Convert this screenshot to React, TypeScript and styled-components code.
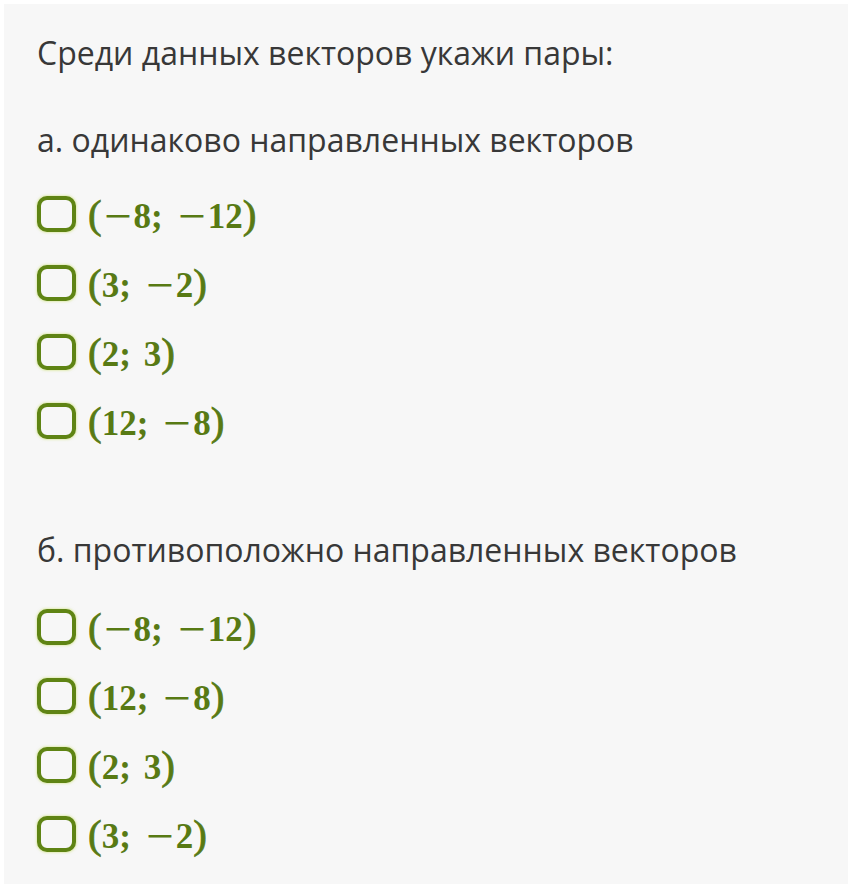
import React from "react";
import styled, { createGlobalStyle } from "styled-components";

const Global = createGlobalStyle`
  html, body { margin: 0; padding: 0; background: #ffffff; }
  body { font-family: "Open Sans", "Noto Sans", sans-serif; }
`;

const Panel = styled.div`
  margin: 4px 6px 0 4px;
  height: 880px;
  box-sizing: border-box;
  background: #f7f7f7;
  padding: 28px 0 0 33px;
  display: flex;
  flex-direction: column;
`;

const Heading = styled.div<{ $gap: number }>`
  font-family: "Open Sans", "Noto Sans", sans-serif;
  font-size: 32px;
  line-height: 42px;
  color: #383838;
  margin-top: ${(p) => p.$gap}px;
`;

const Options = styled.div<{ $gap: number }>`
  display: flex;
  flex-direction: column;
  margin-top: ${(p) => p.$gap}px;
`;

const Option = styled.label`
  height: 69px;
  display: flex;
  align-items: center;
  gap: 12px;
  cursor: pointer;
`;

const Box = styled.span`
  width: 39px;
  height: 36px;
  box-sizing: border-box;
  border: 4px solid #5f8414;
  border-radius: 10px;
  box-shadow: 0 0 2px 1px rgba(205, 225, 120, 0.5);
  background: #f7f7f7;
  flex: none;
  margin-top: -4px;
`;

const Math = styled.span`
  font-family: "Liberation Serif", "Times New Roman", serif;
  font-weight: 700;
  font-size: 35px;
  line-height: 40px;
  color: #587a14;
  white-space: pre;
  display: inline-flex;
  align-items: baseline;
`;

const Paren = styled.span`
  font-size: 41px;
  font-weight: 400;
  -webkit-text-stroke: 0.8px #587a14;
`;

const Minus = styled.span`
  display: inline-block;
  transform: scaleX(1.4);
  margin: 0 6px 0 6px;
`;

const Semi = styled.span`
  margin-right: 13px;
`;

function Expr({ text }: { text: string }) {
  return (
    <Math>
      {Array.from(text).map((c, i) => {
        if (c === "(" || c === ")") return <Paren key={i}>{c}</Paren>;
        if (c === "−") return <Minus key={i}>{c}</Minus>;
        if (c === ";") return <Semi key={i}>{c}</Semi>;
        return <React.Fragment key={i}>{c}</React.Fragment>;
      })}
    </Math>
  );
}

const groupA = ["(−8; −12)", "(3; −2)", "(2; 3)", "(12; −8)"];
const groupB = ["(−8; −12)", "(12; −8)", "(2; 3)", "(3; −2)"];

export default function App() {
  return (
    <>
      <Global />
      <Panel>
        <Heading $gap={0}>Среди данных векторов укажи пары:</Heading>
        <Heading $gap={45}>а. одинаково направленных векторов</Heading>
        <Options $gap={20}>
          {groupA.map((t, i) => (
            <Option key={i}>
              <Box />
              <Expr text={t} />
            </Option>
          ))}
        </Options>
        <Heading $gap={72}>б. противоположно направленных векторов</Heading>
        <Options $gap={23}>
          {groupB.map((t, i) => (
            <Option key={i}>
              <Box />
              <Expr text={t} />
            </Option>
          ))}
        </Options>
      </Panel>
    </>
  );
}
